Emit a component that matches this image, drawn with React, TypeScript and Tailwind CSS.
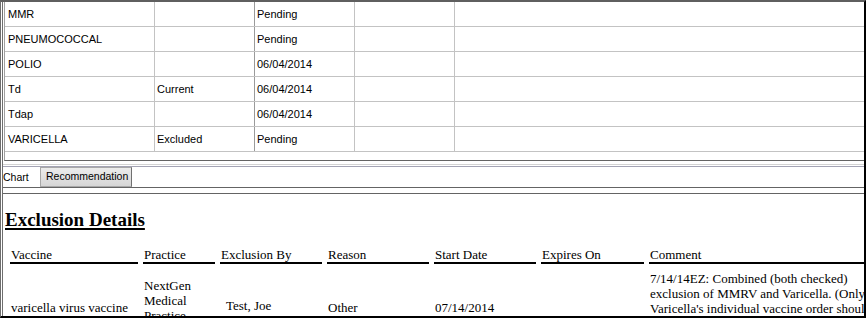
const rows = [
  { name: "MMR", status: "", due: "Pending" },
  { name: "PNEUMOCOCCAL", status: "", due: "Pending" },
  { name: "POLIO", status: "", due: "06/04/2014" },
  { name: "Td", status: "Current", due: "06/04/2014" },
  { name: "Tdap", status: "", due: "06/04/2014" },
  { name: "VARICELLA", status: "Excluded", due: "Pending" },
];

const headers = [
  "Vaccine",
  "Practice",
  "Exclusion By",
  "Reason",
  "Start Date",
  "Expires On",
  "Comment",
];

export default function App() {
  return (
    <div className="w-[866px] h-[318px] overflow-hidden bg-white border-t-2 border-t-[#5f5f5f] border-l border-l-[#6e6e6e] border-r-2 border-r-black border-b-2 border-b-black">
      <div className="h-full ml-px border-l border-l-[#6e6e6e] flex flex-col">
        {/* immunization grid */}
        <div className="ml-px h-[159px] shrink-0 border-l border-l-[#a0a0a0] border-b border-b-[#646464] font-['Liberation_Sans',Arial,sans-serif] text-[11px] text-black">
          {rows.map((r) => (
            <div key={r.name} className="flex h-[25px] border-b border-b-[#c3c3c3]">
              <div className="w-[150px] shrink-0 border-r border-r-[#c3c3c3] pl-[3px] flex items-center">
                {r.name}
              </div>
              <div className="w-[100px] shrink-0 border-r border-r-[#9a9a9a] pl-[2px] flex items-center">
                {r.status}
              </div>
              <div className="w-[100px] shrink-0 border-r border-r-[#c3c3c3] pl-[2px] flex items-center">
                {r.due}
              </div>
              <div className="w-[100px] shrink-0 border-r border-r-[#c3c3c3]" />
              <div className="flex-1" />
            </div>
          ))}
        </div>

        {/* tabs */}
        <div className="h-[27px] shrink-0 border-b border-b-[#646464] flex flex-col font-['Liberation_Sans',Arial,sans-serif] text-[10.5px] text-black">
          <div className="mt-[3px] h-px bg-[#d3d3d3]" />
          <div className="mt-px h-px bg-[#a3a3b4]" />
          <div className="h-[20px] flex items-start">
            <span className="w-[37px] pt-[4px] leading-[13px]">Chart</span>
            <div className="h-[20px] w-[92px] flex items-center pl-[5px] pb-px leading-[13px] border border-[#a8a8a8] border-r-[#707070] bg-gradient-to-b from-[#ececec] to-[#d6d6d6]">
              Recommendation
            </div>
          </div>
        </div>

        {/* exclusion details */}
        <div className="mt-[5px] flex-1 border-t border-t-[#646464] font-['Liberation_Serif','Times_New_Roman',serif] text-black">
          <h2 className="pt-[15px] pl-[2px] text-[19px] leading-[22px] font-bold underline decoration-2 underline-offset-2">
            Exclusion Details
          </h2>
          <div className="mt-[16px] ml-[7px] grid grid-cols-[128px_72px_102px_102px_102px_103px_232px] gap-x-[5px] text-[13px] leading-[15px]">
            {headers.map((h) => (
              <div key={h} className="pl-px border-b-2 border-b-black">
                {h}
              </div>
            ))}
            <div className="pl-px pt-[36px]">varicella virus vaccine</div>
            <div className="pl-px pt-[14px]">NextGen Medical Practice</div>
            <div className="pl-[6px] pt-[34px]">Test, Joe</div>
            <div className="pl-px pt-[36px]">Other</div>
            <div className="pl-px pt-[36px]">07/14/2014</div>
            <div className="pl-px pt-[36px]"></div>
            <div className="pl-px pt-[7px]">
              7/14/14EZ: Combined (both checked) exclusion of MMRV and Varicella. (Only Varicella's individual vaccine order should
            </div>
          </div>
        </div>
      </div>
    </div>
  );
}
